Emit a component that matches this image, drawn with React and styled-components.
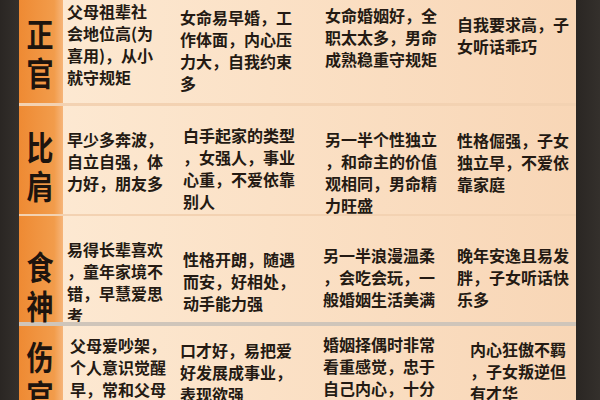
import React from 'react'
import styled, { createGlobalStyle } from 'styled-components'

const GlobalStyle = createGlobalStyle`
    html, body {
        margin: 0;
        padding: 0;
        background: #2c2825;
    }
    body {
        font-family: "Noto Sans CJK SC", "Noto Sans", sans-serif;
    }
`

const Frame = styled.div`
    width: 600px;
    height: 400px;
    display: flex;
    overflow: hidden;
    background: #2c2825;
`
const SideBar = styled.div`
    width: ${props => props.w}px;
    flex-shrink: 0;
    background: linear-gradient(90deg, #2a2623, #34302c);
`
const Table = styled.div`
    flex: 1;
    display: flex;
    flex-direction: column;
`
const Row = styled.div`
    display: grid;
    grid-template-columns: 44px 117px 143px 134px 119px;
    height: ${props => props.h}px;
    flex-shrink: 0;
    border-top: ${props => props.line}px solid ${props => props.strong ? '#cfc5ba' : '#f3d2b2'};
    background: linear-gradient(90deg, #fdead4 0%, #fbe1c6 45%, #f8d6b6 100%);
`
const Label = styled.div`
    background: linear-gradient(90deg, #ee8a33 0%, #f29c4b 80%, #f6b57a 100%);
    display: flex;
    flex-direction: column;
    align-items: center;
    gap: 8px;
    padding-top: ${props => props.top}px;
    box-sizing: border-box;
`
const LabelChar = styled.span`
    display: block;
    height: 31px;
    line-height: 31px;
    font-size: 27px;
    font-weight: 700;
    color: #1e140e;
    transform: scaleY(1.22);
    padding-right: 2px;
`
const Cell = styled.div`
    padding-top: ${props => props.top}px;
    padding-left: ${props => props.left}px;
    font-size: 16px;
    line-height: 22px;
    font-weight: 700;
    color: #241a13;
    white-space: nowrap;
`
const Line = styled.div``

const rows = [
    {
        label: ['正', '官'], labelTop: 17, h: 103, line: 0,
        cells: [
            { top: 0, left: 4, lines: ['父母祖辈社', '会地位高(为', '喜用)，从小', '就守规矩'] },
            { top: 6, left: 0, lines: ['女命易早婚，工', '作体面，内心压', '力大，自我约束', '多'] },
            { top: 4, left: 2, lines: ['女命婚姻好，全', '职太太多，男命', '成熟稳重守规矩'] },
            { top: 13, left: 0, lines: ['自我要求高，子', '女听话乖巧'] },
        ],
    },
    {
        label: ['比', '肩'], labelTop: 24, h: 108, line: 3,
        cells: [
            { top: 22, left: 4, lines: ['早少多奔波，', '自立自强，体', '力好，朋友多'] },
            { top: 18, left: 3, lines: ['白手起家的类型', '，女强人，事业', '心重，不爱依靠', '别人'] },
            { top: 22, left: 2, lines: ['另一半个性独立', '，和命主的价值', '观相同，男命精', '力旺盛'] },
            { top: 23, left: 0, lines: ['性格倔强，子女', '独立早，不爱依', '靠家庭'] },
        ],
    },
    {
        label: ['食', '神'], labelTop: 34, h: 106, line: 2,
        cells: [
            { top: 22, left: 4, lines: ['易得长辈喜欢', '，童年家境不', '错，早慧爱思', '考'] },
            { top: 32, left: 3, lines: ['性格开朗，随遇', '而安，好相处，', '动手能力强'] },
            { top: 28, left: 0, lines: ['另一半浪漫温柔', '，会吃会玩，一', '般婚姻生活美满'] },
            { top: 28, left: 0, lines: ['晚年安逸且易发', '胖，子女听话快', '乐多'] },
        ],
    },
    {
        label: ['伤', '官'], labelTop: 14, h: 112, line: 4, strong: true,
        cells: [
            { top: 8, left: 7, lines: ['父母爱吵架，', '个人意识觉醒', '早，常和父母'] },
            { top: 13, left: 0, lines: ['口才好，易把爱', '好发展成事业，', '表现欲强'] },
            { top: 7, left: 0, lines: ['婚姻择偶时非常', '看重感觉，忠于', '自己内心，十分'] },
            { top: 12, left: 13, lines: ['内心狂傲不羁', '，子女叛逆但', '有才华'] },
        ],
    },
]

const App = () => {
    return (
        <>
            <GlobalStyle />
            <Frame>
                <SideBar w={19} />
                <Table>
                    {rows.map((row, i) => (
                        <Row key={i} h={row.h} line={row.line} strong={row.strong}>
                            <Label top={row.labelTop}>
                                {row.label.map(ch => <LabelChar key={ch}>{ch}</LabelChar>)}
                            </Label>
                            {row.cells.map((cell, j) => (
                                <Cell key={j} top={cell.top} left={cell.left}>
                                    {cell.lines.map((text, k) => <Line key={k}>{text}</Line>)}
                                </Cell>
                            ))}
                        </Row>
                    ))}
                </Table>
                <SideBar w={24} />
            </Frame>
        </>
    )
}

export default App
